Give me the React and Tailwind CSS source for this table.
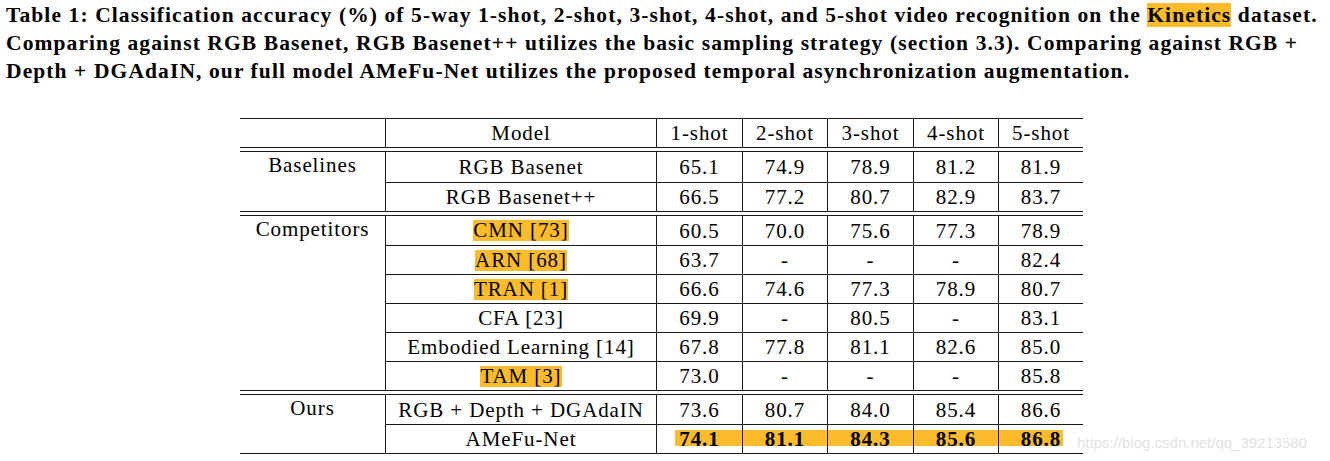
import React from 'react';

const hl = 'bg-[#fcbb2b]';

const groups = [
  {
    label: 'Baselines',
    rows: [
      { model: 'RGB Basenet', vals: ['65.1', '74.9', '78.9', '81.2', '81.9'], h: 'h-[30px]' },
      { model: 'RGB Basenet++', vals: ['66.5', '77.2', '80.7', '82.9', '83.7'] },
    ],
  },
  {
    label: 'Competitors',
    rows: [
      { model: 'CMN [73]', mark: true, vals: ['60.5', '70.0', '75.6', '77.3', '78.9'], h: 'h-[29px]' },
      { model: 'ARN [68]', mark: true, vals: ['63.7', '-', '-', '-', '82.4'] },
      { model: 'TRAN [1]', mark: true, vals: ['66.6', '74.6', '77.3', '78.9', '80.7'] },
      { model: 'CFA [23]', vals: ['69.9', '-', '80.5', '-', '83.1'] },
      { model: 'Embodied Learning [14]', vals: ['67.8', '77.8', '81.1', '82.6', '85.0'] },
      { model: 'TAM [3]', mark: true, vals: ['73.0', '-', '-', '-', '85.8'] },
    ],
  },
  {
    label: 'Ours',
    rows: [
      { model: 'RGB + Depth + DGAdaIN', vals: ['73.6', '80.7', '84.0', '85.4', '86.6'], h: 'h-[29px]' },
      { model: 'AMeFu-Net', best: true, vals: ['74.1', '81.1', '84.3', '85.6', '86.8'] },
    ],
  },
];

// widths of the five number columns, each including its left rule
const numCols = ['w-[86px]', 'w-[85px]', 'w-[86px]', 'w-[85px]', 'w-[85px]'];

function NumCell({ v, i, best }) {
  return (
    <div className={`${numCols[i]} relative border-l border-[#1a1a1a] flex items-center justify-center`}>
      {best && (
        <div
          className={`absolute top-[5px] h-[16px] ${hl} ${i === 0 ? 'left-[18px] right-0' : i === 4 ? 'left-0 right-[20px]' : 'left-0 right-0'}`}
        />
      )}
      <span className={`relative ${best ? 'font-bold' : ''}`}>{v}</span>
    </div>
  );
}

function DoubleRule() {
  return <div className="h-[5px] border-t border-b border-[#1a1a1a]" />;
}

export default function App() {
  return (
    <div className="w-[1330px] h-[461px] relative bg-white overflow-hidden text-black font-['Liberation_Serif',serif]">
      {/* caption */}
      <div className="pl-[6px] pt-[1px] text-[21.5px] leading-[28px] font-bold whitespace-nowrap tracking-[1.1px]">
        <div>
          Table 1: Classification accuracy (%) of 5-way 1-shot, 2-shot, 3-shot, 4-shot, and 5-shot video recognition on the{' '}
          <span className={hl}>Kinetics</span> dataset.
        </div>
        <div>
          Comparing against RGB Basenet, RGB Basenet++ utilizes the basic sampling strategy (section 3.3). Comparing against RGB +
        </div>
        <div>Depth + DGAdaIN, our full model AMeFu-Net utilizes the proposed temporal asynchronization augmentation.</div>
      </div>

      {/* table */}
      <div className="ml-[240px] mt-[33px] w-[843px] text-[21px] leading-[24px] tracking-[0.9px]">
        <div className="flex h-[29px] border-t border-[#1a1a1a]">
          <div className="w-[146px] border-r border-[#1a1a1a]" />
          <div className="w-[270px] flex items-center justify-center">Model</div>
          {['1-shot', '2-shot', '3-shot', '4-shot', '5-shot'].map((s, i) => (
            <NumCell key={s} v={s} i={i} />
          ))}
        </div>

        {groups.map((g) => (
          <div key={g.label}>
            <DoubleRule />
            <div className="flex">
              <div className="w-[146px] border-r border-[#1a1a1a] flex justify-center pt-[1px]">{g.label}</div>
              <div className="flex flex-col">
                {g.rows.map((r, ri) => (
                  <div
                    key={r.model}
                    className={`flex ${r.h || 'h-[29px]'} ${ri > 0 ? 'border-t border-[#1a1a1a]' : ''}`}
                  >
                    <div className="w-[270px] flex items-center justify-center">
                      <span className={r.mark ? `${hl} leading-[21px]` : ''}>{r.model}</span>
                    </div>
                    {r.vals.map((v, i) => (
                      <NumCell key={i} v={v} i={i} best={r.best} />
                    ))}
                  </div>
                ))}
              </div>
            </div>
          </div>
        ))}
        <div className="border-t border-[#1a1a1a]" />
      </div>

      {/* watermark */}
      <div className="absolute left-[1077px] top-[432px] text-[15px] text-[#e2e2e2] font-['Liberation_Sans',sans-serif]">
        https://blog.csdn.net/qq_39213580
      </div>
    </div>
  );
}
